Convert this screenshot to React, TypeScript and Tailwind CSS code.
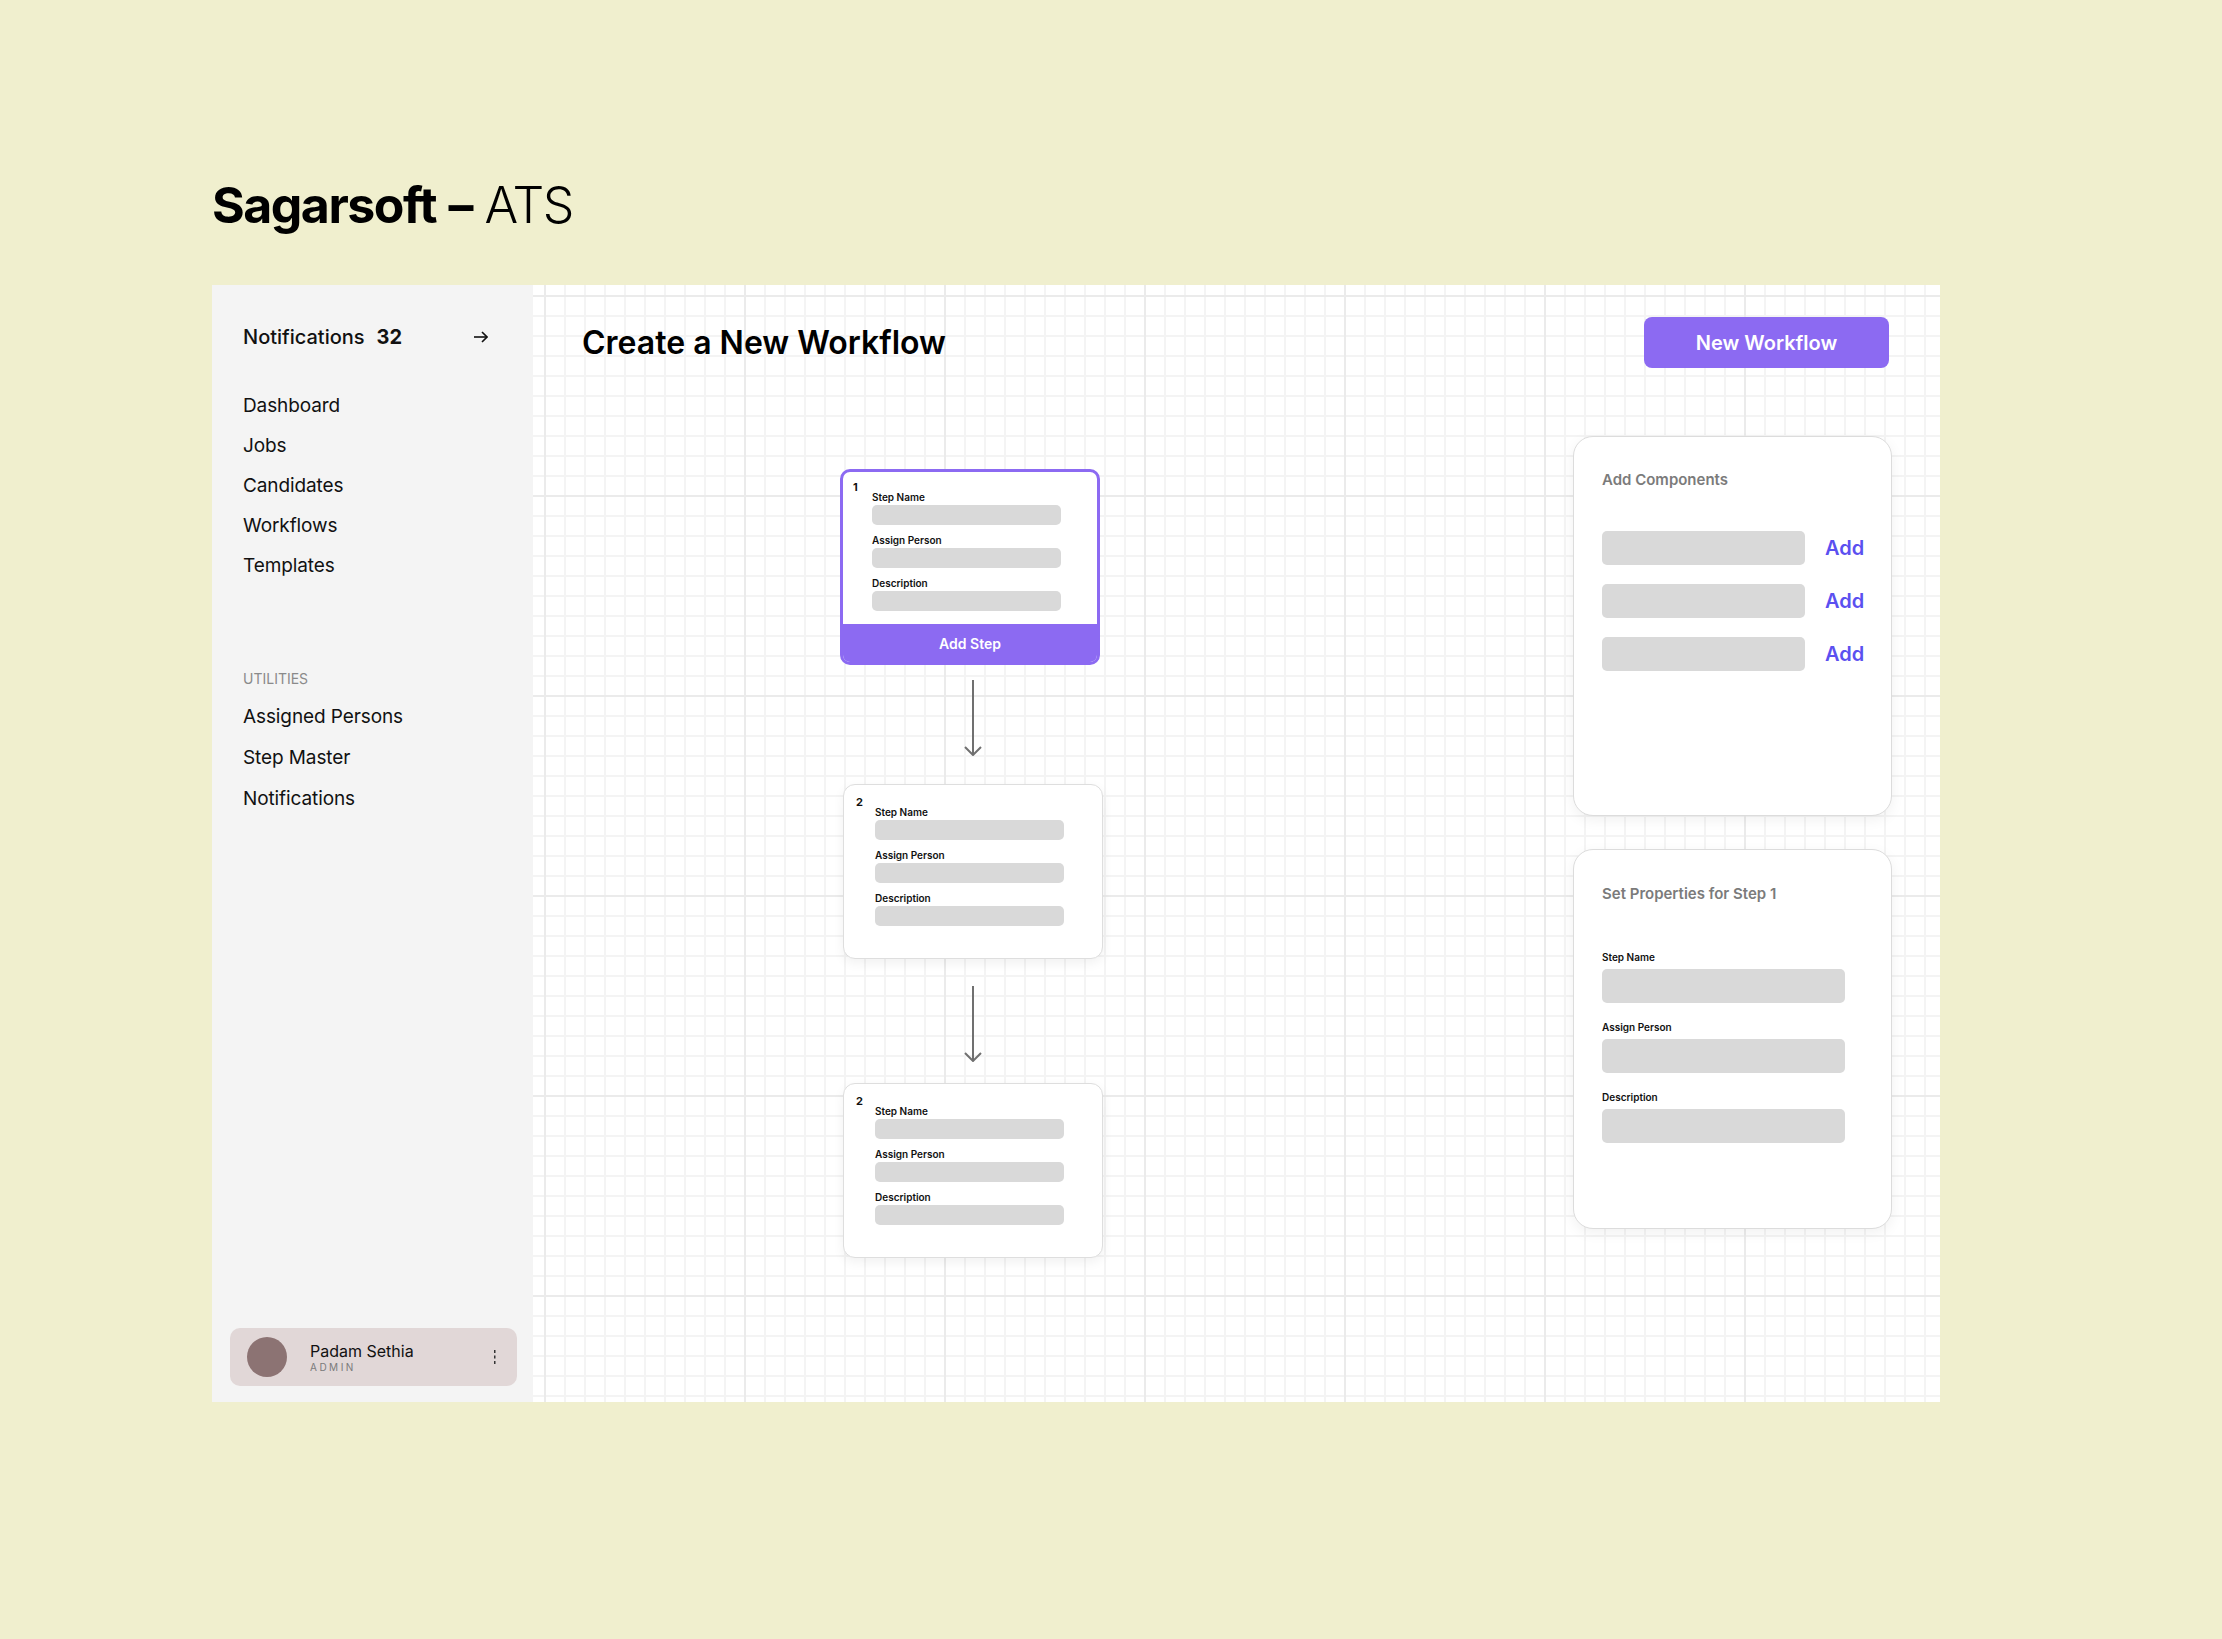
import React from 'react';

const gridBg =
  "bg-white bg-[linear-gradient(to_right,#ebebeb_2px,transparent_2px),linear-gradient(to_bottom,#ebebeb_2px,transparent_2px),linear-gradient(to_right,#f4f4f4_2px,transparent_2px),linear-gradient(to_bottom,#f4f4f4_2px,transparent_2px)] bg-[size:200px_200px,200px_200px,20px_20px,20px_20px] bg-[position:11px_10px]";

const stepLabels = ['Step Name', 'Assign Person', 'Description'];

function StepFields() {
  return (
    <div className="flex flex-col gap-[8px] w-[189px]">
      {stepLabels.map((label) => (
        <div key={label}>
          <div className="text-[10px] leading-[14px] font-semibold text-[#111]">{label}</div>
          <div className="mt-[1px] h-[20px] rounded-[5px] bg-[#d9d9d9]" />
        </div>
      ))}
    </div>
  );
}

function StepCard({ num }: { num: number }) {
  return (
    <div className="ml-[3px] w-[260px] rounded-[12px] border border-[#dedede] bg-white shadow-[0_4px_12px_rgba(0,0,0,0.06)]">
      <div className="flex pl-[12px] pt-[10px] pb-[32px]">
        <span className="w-[19px] text-[11px] leading-[14px] font-bold text-[#111]">{num}</span>
        <div className="mt-[10px]">
          <StepFields />
        </div>
      </div>
    </div>
  );
}

function DownArrow() {
  return (
    <svg width="20" height="76" viewBox="0 0 20 76" className="ml-[123px]">
      <line x1="10" y1="0" x2="10" y2="75" stroke="#707070" strokeWidth="2" />
      <polyline points="2,67 10,75 18,67" fill="none" stroke="#707070" strokeWidth="2" />
    </svg>
  );
}

function Panel({ children, className = '' }: { children: React.ReactNode; className?: string }) {
  return (
    <div
      className={`h-[380px] rounded-[20px] border border-[#dcdcdc] bg-white pl-[28px] shadow-[0_4px_14px_rgba(0,0,0,0.06)] ${className}`}
    >
      {children}
    </div>
  );
}

export default function App() {
  const mainNav = ['Dashboard', 'Jobs', 'Candidates', 'Workflows', 'Templates'];
  const utilNav = ['Assigned Persons', 'Step Master', 'Notifications'];

  return (
    <div className="min-h-screen bg-[#f0efce] pl-[212px] pt-[175px] pb-[237px] font-['Inter',sans-serif] text-[#111]">
      <h1 className="text-[50px] leading-[60px] tracking-[-1.5px] text-black">
        <span className="font-bold">Sagarsoft</span>
        <span className="ml-[2px] font-bold"> –</span> <span className="font-light">ATS</span>
      </h1>

      <div className="mt-[50px] flex w-[1728px] h-[1117px]">
        {/* sidebar */}
        <aside className="w-[321px] shrink-0 bg-[#f4f4f4] flex flex-col">
          <div className="pl-[31px] pr-[45px] pt-[38px]">
            <div className="flex items-center justify-between h-[28px]">
              <div className="text-[20px] leading-[28px] font-medium">
                Notifications<span className="ml-[12px] font-bold">32</span>
              </div>
              <svg width="14" height="12" viewBox="0 0 14 12">
                <line x1="0" y1="6" x2="13" y2="6" stroke="#111" strokeWidth="1.6" />
                <polyline points="8,1 13,6 8,11" fill="none" stroke="#111" strokeWidth="1.6" />
              </svg>
            </div>

            <nav className="mt-[35px] flex flex-col">
              {mainNav.map((item) => (
                <a key={item} className="text-[19px] leading-[40px] tracking-[-0.1px]">
                  {item}
                </a>
              ))}
            </nav>

            <div className="mt-[83px] text-[14px] leading-[20px] text-[#8a8a8a]">UTILITIES</div>
            <nav className="mt-[7px] flex flex-col">
              {utilNav.map((item) => (
                <a key={item} className="text-[19px] leading-[41px] tracking-[-0.1px]">
                  {item}
                </a>
              ))}
            </nav>
          </div>

          <div className="mt-auto mb-[16px] ml-[18px] mr-[16px] h-[58px] rounded-[10px] bg-[#e1d7d7] flex items-center pl-[17px] pr-[21px]">
            <div className="w-[40px] h-[40px] rounded-full bg-[#8c7373]" />
            <div className="ml-[23px] flex-1">
              <div className="text-[16px] leading-[20px]">Padam Sethia</div>
              <div className="text-[10px] leading-[12px] tracking-[0.25em] text-[#7a7a7a]">ADMIN</div>
            </div>
            <svg width="2" height="14" viewBox="0 0 2 14">
              <rect x="0" y="0" width="1.5" height="3" fill="#333" />
              <rect x="0" y="5.5" width="1.5" height="3" fill="#333" />
              <rect x="0" y="11" width="1.5" height="3" fill="#333" />
            </svg>
          </div>
        </aside>

        {/* canvas */}
        <main className={`flex-1 flex flex-col ${gridBg}`}>
          <div className="flex items-center justify-between pl-[49px] pr-[51px] pt-[32px]">
            <h2 className="text-[32px] font-semibold text-black">Create a New Workflow</h2>
            <button className="h-[51px] w-[245px] rounded-[8px] bg-[#8c6af2] text-white text-[20px] font-semibold">
              New Workflow
            </button>
          </div>

          <div className="flex justify-between pl-[307px] pr-[48px]">
            {/* steps */}
            <div className="mt-[101px] flex flex-col">
              <div className="w-[260px] rounded-[10px] border-[3px] border-[#8c6af2] bg-white overflow-hidden">
                <div className="flex pl-[10px] pt-[8px] pb-[13px]">
                  <span className="w-[19px] text-[11px] leading-[14px] font-bold text-[#111]">1</span>
                  <div className="mt-[10px]">
                    <StepFields />
                  </div>
                </div>
                <div className="h-[38px] bg-[#8c6af2] flex items-center justify-center text-white text-[14px] font-semibold">
                  Add Step
                </div>
              </div>

              <div className="mt-[15px] mb-[28px]">
                <DownArrow />
              </div>
              <StepCard num={2} />
              <div className="mt-[27px] mb-[21px]">
                <DownArrow />
              </div>
              <StepCard num={2} />
            </div>

            {/* right panels */}
            <div className="mt-[68px] flex flex-col gap-[33px] w-[319px]">
              <Panel className="pt-[33px]">
                <div className="text-[15px] leading-[20px] font-semibold text-[#7b7b7b]">Add Components</div>
                <div className="mt-[41px] flex flex-col gap-[19px]">
                  {[0, 1, 2].map((i) => (
                    <div key={i} className="flex items-center gap-[20px]">
                      <div className="w-[203px] h-[34px] rounded-[5px] bg-[#d9d9d9]" />
                      <span className="text-[20px] font-semibold text-[#5b50f0]">Add</span>
                    </div>
                  ))}
                </div>
              </Panel>

              <Panel className="pt-[34px]">
                <div className="text-[15px] leading-[20px] font-semibold text-[#7b7b7b]">Set Properties for Step 1</div>
                <div className="mt-[46px] flex flex-col gap-[17px]">
                  {stepLabels.map((label) => (
                    <div key={label}>
                      <div className="text-[10px] leading-[14px] font-semibold text-[#111]">{label}</div>
                      <div className="mt-[5px] w-[243px] h-[34px] rounded-[5px] bg-[#d9d9d9]" />
                    </div>
                  ))}
                </div>
              </Panel>
            </div>
          </div>
        </main>
      </div>
    </div>
  );
}
